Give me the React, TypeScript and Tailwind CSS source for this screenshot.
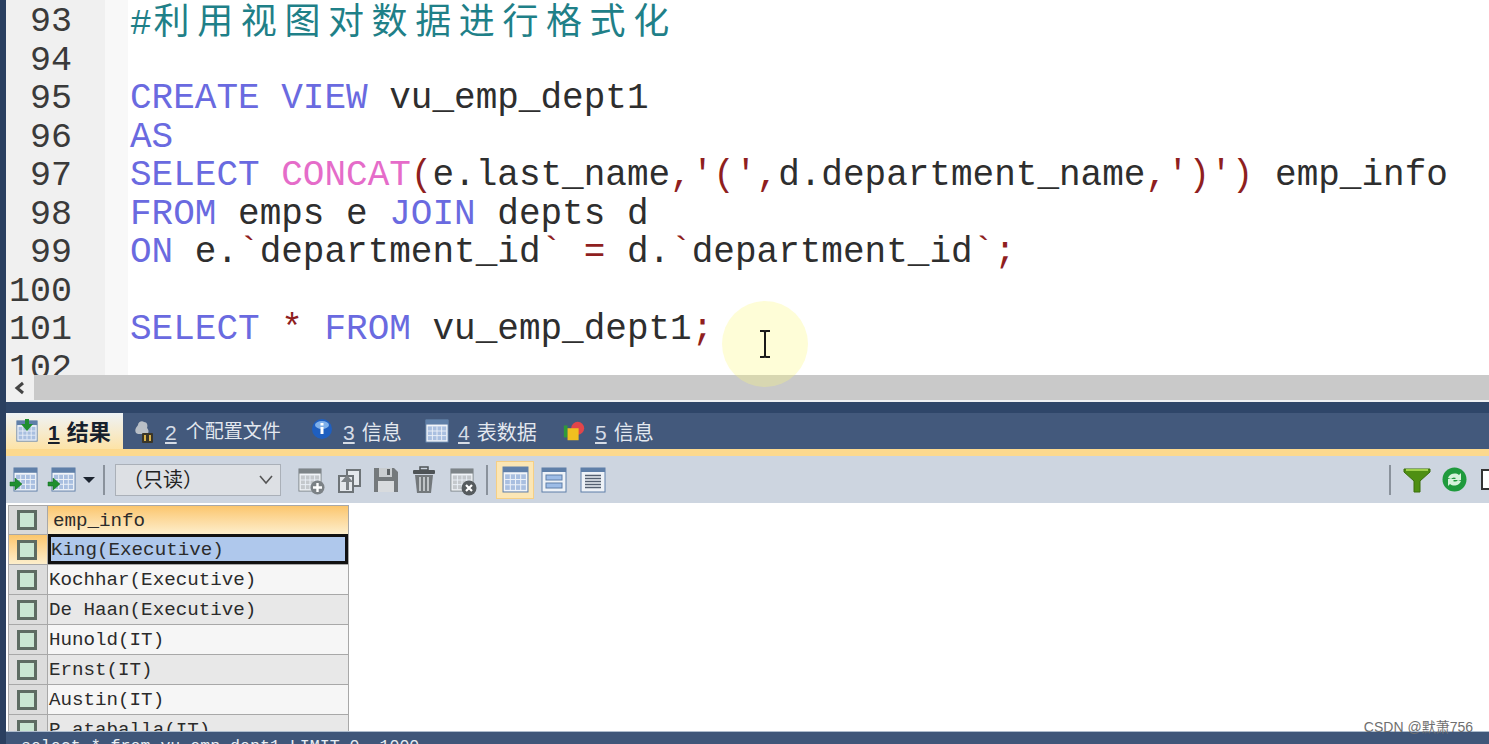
import React from 'react';

const MONO = "font-['Liberation_Mono',monospace]";
const CJK = "font-['Liberation_Sans','Noto_Sans_CJK_SC',sans-serif]";

const kw = 'text-[#6a6ae0]';
const fn = 'text-[#e56cc9]';
const pn = 'text-[#8f1f1f]';
const id = 'text-[#2e2e2e]';

type Tok = [string, string];

const codeLines: Tok[][] = [
  [],
  [],
  [[kw, 'CREATE VIEW '], [id, 'vu_emp_dept1']],
  [[kw, 'AS']],
  [[kw, 'SELECT '], [fn, 'CONCAT'], [pn, '('], [id, 'e.last_name'], [pn, ",'(',"], [id, 'd.department_name'], [pn, ",')')"], [id, ' emp_info']],
  [[kw, 'FROM '], [id, 'emps e '], [kw, 'JOIN '], [id, 'depts d']],
  [[kw, 'ON '], [id, 'e.'], [pn, '`'], [id, 'department_id'], [pn, '`'], [id, ' '], [pn, '='], [id, ' d.'], [pn, '`'], [id, 'department_id'], [pn, '`;']],
  [],
  [[kw, 'SELECT '], [pn, '* '], [kw, 'FROM '], [id, 'vu_emp_dept1'], [pn, ';']],
];

const lineNumbers = [93, 94, 95, 96, 97, 98, 99, 100, 101, 102];

const rows = ['King(Executive)', 'Kochhar(Executive)', 'De Haan(Executive)', 'Hunold(IT)', 'Ernst(IT)', 'Austin(IT)', 'P.ataballa(IT)'];

const GridGlyph = ({ size = 26, muted = false }: { size?: number; muted?: boolean }) => {
  const head = muted ? '#7d8488' : '#5f7fa8';
  const cell = muted ? '#c4c8cc' : '#a9bfe0';
  return (
    <svg width={size} height={size} viewBox="0 0 26 26">
      <rect x="1" y="1" width="24" height="24" fill="#f2f5f9" stroke={head} />
      <rect x="1" y="1" width="24" height="5" fill={head} />
      <rect x="3" y="8" width="20" height="15" fill={cell} />
      <path d="M8 8v15M13 8v15M18 8v15M3 13h20M3 18h20" stroke="#ecf1f8" strokeWidth="1" />
    </svg>
  );
};

const ArrowRight = () => (
  <svg width="14" height="14" viewBox="0 0 14 14" className="absolute -left-[4px] bottom-[1px]">
    <path d="M1 5h5V1l7 6-7 6V9H1z" fill="#1f8f2f" stroke="#0f6a1d" strokeWidth="0.5" />
  </svg>
);

const ToolBtn = ({ children, className = '' }: { children: React.ReactNode; className?: string }) => (
  <div className={`flex h-[38px] w-[38px] items-center justify-center ${className}`}>{children}</div>
);

const Sep = () => <div className="h-[30px] w-[2px] bg-[#8a929c]" />;

const Tab = ({ n, label, icon, active = false, w, labelClass = 'text-[20px]' }: { n: string; label: string; icon: React.ReactNode; active?: boolean; w: string; labelClass?: string }) => (
  <div
    className={`flex h-[36px] items-center ${w} ${CJK} ${
      active
        ? 'bg-gradient-to-b from-[#eef2f6] to-[#fde3a6] pl-[9px] font-bold text-[#17202c]'
        : 'bg-[#43597c] pl-[9px] text-[#e3e8ef]'
    }`}
  >
    <div className="mr-[9px] flex w-[24px] justify-center">{icon}</div>
    <span className={`mr-[7px] pt-[3px] text-[21px] underline underline-offset-2 ${active ? '' : 'text-[#d6dce6]'}`}>{n}</span>
    <span className={`whitespace-nowrap pt-[3px] ${labelClass}`}>{label}</span>
  </div>
);

const RowMark = ({ bg }: { bg: string }) => (
  <div className={`flex h-full w-[39px] shrink-0 items-center justify-center border-r border-[#a8a8a8] pr-[3px] ${bg}`}>
    <div className="h-[20px] w-[20px] border-[3px] border-[#5d6b62] bg-[#c9e6d2]" />
  </div>
);

export default function App() {
  return (
    <div className="relative flex h-[744px] w-[1489px] overflow-hidden bg-white">
      <div className="w-[6px] shrink-0 bg-[#2a3f60]" />

      <div className="flex min-w-0 flex-1 flex-col">
        {/* editor */}
        <div className="flex h-[375px] shrink-0 overflow-hidden">
          <div className={`w-[99px] shrink-0 bg-[#f0f0f0] pr-[33px] pt-[3px] text-right ${MONO} text-[35px] leading-[38.5px] text-[#3a3a3a]`}>
            {lineNumbers.map(n => (
              <div key={n}>{n}</div>
            ))}
          </div>
          <div className="w-[23px] shrink-0 bg-[#f8f8f8]" />
          <div className={`${MONO} min-w-0 flex-1 pl-[2px] pt-[3px] text-[36px] leading-[38.5px]`}>
            <div className="h-[38.5px] whitespace-nowrap text-[#1f8088]">
              <span className="mr-[2px]">#</span>
              <span className={`${CJK} text-[36px] tracking-[7.6px]`}>利用视图对数据进行格式化</span>
            </div>
            {codeLines.slice(1).map((line, i) => (
              <div key={i} className="h-[38.5px] whitespace-pre">
                {line.map(([c, t], j) => (
                  <span key={j} className={c}>
                    {t}
                  </span>
                ))}
              </div>
            ))}
          </div>
        </div>

        {/* horizontal scrollbar */}
        <div className="flex h-[27px] shrink-0 border-b-2 border-[#eef0f3] bg-[#c9c9c9]">
          <div className="flex w-[28px] items-center justify-center bg-[#f0f0f0]">
            <svg width="14" height="16" viewBox="0 0 14 16">
              <path d="M10 3 4 8l6 5" fill="none" stroke="#444444" strokeWidth="3" />
            </svg>
          </div>
        </div>

        <div className="h-[11px] shrink-0 bg-[#2f4669]" />

        {/* result tabs */}
        <div className="flex h-[36px] shrink-0 bg-[#43597c]">
          <Tab
            active
            w="w-[117px]"
            n="1"
            label="结果"
            labelClass="text-[22px]"
            icon={
              <div className="relative">
                <GridGlyph size={22} />
                <svg width="14" height="14" viewBox="0 0 14 14" className="absolute -top-[2px] left-[4px]">
                  <path d="M5 1h4v5h4l-6 7-6-7h4z" fill="#1f8f2f" />
                </svg>
              </div>
            }
          />
          <Tab
            w="w-[178px]"
            n="2"
            label="个配置文件"
            labelClass="text-[19px] ml-[2px]"
            icon={
              <svg width="24" height="26" viewBox="0 0 24 26">
                <path d="M4 15c-2-4 1-6 2-8 0-3 4-5 6-3 3 0 4 3 3 6 2 2 2 5 0 6H6z" fill="#b9bfc6" />
                <rect x="10" y="15" width="11" height="10" rx="1" fill="#3a3526" />
                <path d="M13 17v6M18 17v6" stroke="#d9b24a" strokeWidth="2" />
              </svg>
            }
          />
          <Tab
            w="w-[115px]"
            n="3"
            label="信息"
            icon={
              <svg width="24" height="24" viewBox="0 0 24 24">
                <circle cx="12" cy="10" r="10" fill="#1f5fc0" />
                <ellipse cx="12" cy="6" rx="7" ry="4" fill="#7fb0ea" />
                <rect x="10.5" y="8" width="3" height="7" fill="#ffffff" />
                <rect x="10.5" y="4" width="3" height="2.5" fill="#ffffff" />
              </svg>
            }
          />
          <Tab w="w-[137px]" n="4" label="表数据" icon={<GridGlyph size={24} />} />
          <Tab
            w="w-[105px]"
            n="5"
            label="信息"
            icon={
              <svg width="26" height="22" viewBox="0 0 26 22">
                <rect x="2" y="5" width="4" height="13" fill="#2f9a3a" />
                <circle cx="17" cy="8" r="7" fill="#e2454a" />
                <rect x="6" y="8" width="12" height="13" fill="#f0c020" />
              </svg>
            }
          />
        </div>

        <div className="h-[7px] shrink-0 bg-[#fcd98e]" />

        {/* toolbar */}
        <div className="flex h-[47px] shrink-0 items-center bg-[#cdd5e0]">
          <ToolBtn className="w-[36px]">
            <div className="relative">
              <GridGlyph size={25} />
              <ArrowRight />
            </div>
          </ToolBtn>
          <ToolBtn className="w-[33px]">
            <div className="relative">
              <GridGlyph size={25} />
              <ArrowRight />
            </div>
          </ToolBtn>
          <svg width="14" height="8" viewBox="0 0 14 8">
            <path d="M1 1h12L7 7z" fill="#1c2430" />
          </svg>
          <div className="ml-[7px]">
            <Sep />
          </div>
          <div className={`ml-[10px] flex h-[32px] w-[166px] items-center justify-between border border-[#aab0b8] bg-[#dde0e4] pl-[7px] pr-[6px] ${CJK} text-[20px] text-[#222222]`}>
            <span>（只读）</span>
            <svg width="16" height="10" viewBox="0 0 16 10">
              <path d="M2 1l6 7 6-7" fill="none" stroke="#555555" strokeWidth="1.6" />
            </svg>
          </div>
          <ToolBtn className="ml-[10px]">
            <div className="relative">
              <GridGlyph size={24} muted />
              <svg width="15" height="15" viewBox="0 0 15 15" className="absolute -bottom-[3px] -right-[3px]">
                <circle cx="7.5" cy="7.5" r="7" fill="#7c8286" />
                <path d="M7.5 3v9M3 7.5h9" stroke="#ffffff" strokeWidth="2.4" />
              </svg>
            </div>
          </ToolBtn>
          <ToolBtn>
            <svg width="28" height="28" viewBox="0 0 28 28">
              <rect x="13" y="4" width="13" height="16" fill="#e4e8ec" stroke="#6e7478" strokeWidth="2" />
              <rect x="5" y="10" width="14" height="16" fill="#e4e8ec" stroke="#6e7478" strokeWidth="2" />
              <path d="M12 24v-8H7l6-7 6 7h-4v8z" fill="#7c8286" />
            </svg>
          </ToolBtn>
          <ToolBtn>
            <svg width="26" height="26" viewBox="0 0 26 26">
              <path d="M1 1h20l4 4v20H1z" fill="#74797c" />
              <rect x="6" y="1" width="13" height="9" fill="#c9cdd0" />
              <rect x="14" y="2" width="3" height="6" fill="#5d6265" />
              <rect x="5" y="14" width="16" height="11" fill="#d8dbde" />
            </svg>
          </ToolBtn>
          <ToolBtn>
            <svg width="26" height="28" viewBox="0 0 26 28">
              <rect x="9" y="1" width="8" height="3" fill="none" stroke="#4e5356" strokeWidth="1.5" />
              <rect x="2" y="4" width="22" height="4" rx="1" fill="#4e5356" />
              <path d="M4 9h18l-2 18H6z" fill="#73787b" />
              <path d="M9 11v14M13 11v14M17 11v14" stroke="#d2d6d9" strokeWidth="1.6" />
            </svg>
          </ToolBtn>
          <ToolBtn>
            <div className="relative">
              <GridGlyph size={24} muted />
              <svg width="16" height="16" viewBox="0 0 16 16" className="absolute -bottom-[4px] -right-[3px]">
                <circle cx="8" cy="8" r="7.5" fill="#565b5e" />
                <path d="M5 5l6 6M11 5l-6 6" stroke="#ffffff" strokeWidth="2.2" />
              </svg>
            </div>
          </ToolBtn>
          <div className="ml-[5px]">
            <Sep />
          </div>
          <ToolBtn className="ml-[8px] border border-[#f5cf85] bg-[#fbe6b5]">
            <GridGlyph size={27} />
          </ToolBtn>
          <ToolBtn className="ml-[1px]">
            <svg width="26" height="26" viewBox="0 0 26 26">
              <rect x="1" y="1" width="24" height="24" fill="#eef2f7" stroke="#5f7fa8" />
              <rect x="1" y="1" width="24" height="4" fill="#5f7fa8" />
              <rect x="5" y="8" width="16" height="5" fill="#9dbce6" stroke="#5f7fa8" />
              <rect x="5" y="16" width="16" height="5" fill="#9dbce6" stroke="#5f7fa8" />
            </svg>
          </ToolBtn>
          <ToolBtn className="ml-[1px]">
            <svg width="26" height="26" viewBox="0 0 26 26">
              <rect x="1" y="1" width="24" height="24" fill="#eef2f7" stroke="#5f7fa8" />
              <rect x="1" y="1" width="24" height="4" fill="#5f7fa8" />
              <path d="M5 8.5h16M5 11.5h16M5 14.5h16M5 17.5h16M5 20.5h16" stroke="#556070" strokeWidth="1.5" />
            </svg>
          </ToolBtn>
          <div className="ml-auto flex items-center">
            <Sep />
            <div className="ml-[12px] flex h-[38px] w-[28px] items-center justify-center">
              <svg width="28" height="26" viewBox="0 0 28 26">
                <path d="M1 2h26v3L17 14v11h-6V14L1 5z" fill="#4f8f12" stroke="#3a6e0c" />
                <path d="M3 3h22" stroke="#9ed04a" strokeWidth="2" />
              </svg>
            </div>
            <div className="ml-[10px] flex h-[38px] w-[26px] items-center justify-center">
              <svg width="25" height="25" viewBox="0 0 25 25">
                <circle cx="12.5" cy="12.5" r="12" fill="#1f9a3c" />
                <path d="M6 11a7 7 0 0 1 11-3l2-2v7h-7l2-2a4 4 0 0 0-5 1zM19 14a7 7 0 0 1-11 3l-2 2v-7h7l-2 2a4 4 0 0 0 5-1z" fill="#d6f2da" />
              </svg>
            </div>
            <div className="ml-[14px] h-[21px] w-[8px] border-y-2 border-l-2 border-[#333333] bg-white" />
          </div>
        </div>

        {/* result grid */}
        <div className="min-h-0 flex-1 overflow-hidden pl-[2px] pt-[2px]">
          <div className={`w-[341px] border-x border-[#a8a8a8] ${MONO} text-[19.2px] text-[#2b2b2b]`}>
            <div className="flex h-[30px] border-y border-[#a8a8a8]">
              <RowMark bg="bg-[#d9d9d9]" />
              <div className="flex flex-1 items-center bg-gradient-to-b from-[#fbc66c] to-[#fdeecb] pl-[5px] pt-[2px]">emp_info</div>
            </div>
            {rows.map((r, i) => (
              <div key={r} className="flex h-[30px] border-b border-[#a8a8a8]">
                <RowMark bg={i === 0 ? 'bg-gradient-to-b from-[#fbc66c] to-[#fdeecb]' : 'bg-[#dcdcdc]'} />
                <div
                  className={`flex flex-1 items-center pt-[2px] ${
                    i === 0
                      ? '-mt-px border-[3px] border-[#111111] bg-[#afc8ec]'
                      : i % 2 === 1
                        ? 'bg-[#f6f6f6] pl-[1px]'
                        : 'bg-[#e8e8e8] pl-[1px]'
                  }`}
                >
                  {r}
                </div>
              </div>
            ))}
          </div>
        </div>

        {/* status bar */}
        <div className={`h-[13px] shrink-0 overflow-hidden border-t border-[#aebccd] bg-[#3f5679] pl-[15px] pt-[5px] ${MONO} text-[16.6px] leading-[20px] whitespace-pre text-[#e8edf3]`}>
          select * from vu_emp_dept1 LIMIT 0, 1000
        </div>
      </div>

      {/* mouse highlight + cursor */}
      <div className="absolute left-[722px] top-[301px] flex h-[86px] w-[86px] items-center justify-center rounded-full bg-[#fdf77a]/30">
        <svg width="12" height="28" viewBox="0 0 12 28">
          <path d="M1 1h4l1 1 1-1h4M6 2v24M1 27h4l1-1 1 1h4" fill="none" stroke="#1a1a1a" strokeWidth="2" />
        </svg>
      </div>

      {/* watermark */}
      <div className={`absolute bottom-[10px] right-[16px] ${CJK} text-[14px] leading-none text-[#6f6f6f]`}>CSDN @默萧756</div>
    </div>
  );
}
